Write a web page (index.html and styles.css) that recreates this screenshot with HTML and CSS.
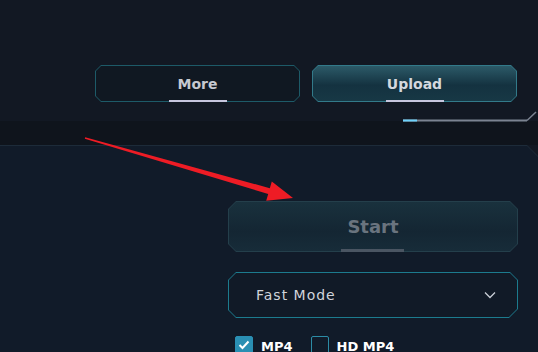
FILE: index.html
```html
<!DOCTYPE html>
<html lang="en">
<head>
  <meta charset="UTF-8" />
  <title>Converter</title>
  <link rel="stylesheet" href="styles.css">
</head>
<body>
  <div class="top">
    <div class="actions">
      <div class="btn btn-more"><div class="btn-face">More</div></div>
      <div class="btn btn-upload"><div class="btn-face">Upload</div></div>
    </div>
    <svg class="progress" width="135" height="11" viewBox="0 0 135 11">
      <line x1="0" y1="9.5" x2="124" y2="9.5" stroke="#7b8391" stroke-width="2"/>
      <line x1="0" y1="9.5" x2="14" y2="9.5" stroke="#6fd2fb" stroke-width="2"/>
      <line x1="124" y1="9.5" x2="133" y2="1" stroke="#7b8391" stroke-width="1.5"/>
    </svg>
  </div>

  <div class="band"></div>

  <div class="panel">
    <div class="panel-inner">
      <div class="controls">
        <div class="start"><div class="start-face">Start</div></div>

        <div class="select">
          <div class="select-face">
            <span>Fast Mode</span>
            <svg width="12" height="8" viewBox="0 0 12 8">
              <polyline points="1,1.5 6,6.5 11,1.5" fill="none" stroke="#c9ced6" stroke-width="1.3"/>
            </svg>
          </div>
        </div>

        <div class="formats">
          <label class="check checked">
            <span class="box">
              <svg width="12" height="10" viewBox="0 0 12 10">
                <polyline points="1.5,5 4.5,8 10.5,1.5" fill="none" stroke="#fff" stroke-width="2"/>
              </svg>
            </span>
            MP4
          </label>
          <label class="check">
            <span class="box"></span>
            HD MP4
          </label>
        </div>
      </div>
    </div>
  </div>

  <!-- annotation arrow -->
  <svg class="arrow" width="538" height="352" viewBox="0 0 538 352">
    <polygon points="85.2,137.3 269.8,188.2 271.8,181.5 293,198 266.2,200.7 268.2,194 84.8,138.7" fill="#ee1c25"/>
  </svg>
</body>
</html>
```

FILE: styles.css
```css
:root {
  --bg: #121823;
  --band: #0f141c;
  --panel: #111b29;
  --teal: #1c7b8e;
  --text: #d3d7de;
}

body {
  margin: 0;
  width: 538px;
  height: 352px;
  overflow: hidden;
  background-color: var(--bg);
  font-family: 'DejaVu Sans', sans-serif;
  color: var(--text);
  position: relative;
}

.top {
  height: 121px;
  box-sizing: border-box;
  padding-top: 65px;
}

.actions {
  display: flex;
  gap: 12px;
  padding-left: 95px;
}

.progress {
  display: block;
  margin: 9px 0 0 403px;
}

.btn {
  position: relative;
  width: 205px;
  height: 37px;
  padding: 1px;
  box-sizing: border-box;
  clip-path: polygon(6px 0, calc(100% - 6px) 0, 100% 6px, 100% calc(100% - 6px), calc(100% - 6px) 100%, 6px 100%, 0 calc(100% - 6px), 0 6px);
}

.btn-face {
  height: 100%;
  display: flex;
  align-items: center;
  justify-content: center;
  font-size: 14px;
  font-weight: bold;
  clip-path: polygon(5px 0, calc(100% - 5px) 0, 100% 5px, 100% calc(100% - 5px), calc(100% - 5px) 100%, 5px 100%, 0 calc(100% - 5px), 0 5px);
}

.btn::after {
  content: '';
  position: absolute;
  left: 50%;
  bottom: 0;
  width: 58px;
  height: 2px;
  margin-left: -29px;
  background-color: #c7c6de;
}

.btn-more {
  background-color: #1d5a68;
}

.btn-more .btn-face {
  background-color: #101822;
  color: #c6c9d0;
}

.btn-upload {
  background-color: #327a8a;
}

.btn-upload .btn-face {
  background: linear-gradient(#2c5a68, #143240 55%, #173845);
  color: #d4d8de;
}

.band {
  height: 24px;
  background-color: var(--band);
}

.panel {
  height: 207px;
  padding-top: 1px;
  box-sizing: border-box;
  background-color: #1d2b39;
  clip-path: polygon(0 0, 527px 0, 100% 11px, 100% 100%, 0 100%);
}

.panel-inner {
  height: 100%;
  background-color: var(--panel);
  clip-path: polygon(0 0, 527px 0, 100% 11px, 100% 100%, 0 100%);
}

.controls {
  width: 290px;
  padding: 55px 0 0 228px;
  display: flex;
  flex-direction: column;
}

.start {
  position: relative;
  height: 51px;
  padding: 1px;
  box-sizing: border-box;
  background-color: #243f4b;
  clip-path: polygon(8px 0, calc(100% - 8px) 0, 100% 8px, 100% calc(100% - 8px), calc(100% - 8px) 100%, 8px 100%, 0 calc(100% - 8px), 0 8px);
}

.start-face {
  height: 100%;
  display: flex;
  align-items: center;
  justify-content: center;
  font-size: 18px;
  font-weight: bold;
  color: #6a747f;
  background: linear-gradient(#19313d, #142633 60%, #172c39);
  clip-path: polygon(7px 0, calc(100% - 7px) 0, 100% 7px, 100% calc(100% - 7px), calc(100% - 7px) 100%, 7px 100%, 0 calc(100% - 7px), 0 7px);
}

.start::after {
  content: '';
  position: absolute;
  left: 113px;
  bottom: 0;
  width: 63px;
  height: 3px;
  background-color: #4a5562;
}

.select {
  margin-top: 20px;
  height: 46px;
  padding: 1px;
  box-sizing: border-box;
  background-color: var(--teal);
  clip-path: polygon(8px 0, calc(100% - 8px) 0, 100% 8px, 100% calc(100% - 9px), calc(100% - 9px) 100%, 8px 100%, 0 calc(100% - 8px), 0 8px);
}

.select-face {
  height: 100%;
  display: flex;
  align-items: center;
  justify-content: space-between;
  padding: 0 21px 0 27px;
  background-color: #111a27;
  font-size: 14px;
  letter-spacing: 1px;
  color: #d0d4db;
  clip-path: polygon(7px 0, calc(100% - 7px) 0, 100% 7px, 100% calc(100% - 8px), calc(100% - 8px) 100%, 7px 100%, 0 calc(100% - 7px), 0 7px);
}

.formats {
  display: flex;
  gap: 18px;
  margin-top: 18px;
  padding-left: 7px;
}

.check {
  display: flex;
  align-items: flex-start;
  gap: 8px;
  font-size: 13px;
  font-weight: bold;
  color: #ffffff;
  line-height: 18px;
  padding-top: 2px;
}

.box {
  width: 18px;
  height: 18px;
  margin-top: -2px;
  box-sizing: border-box;
  border: 1px solid #2c8ca6;
  border-radius: 2px;
  display: flex;
  align-items: center;
  justify-content: center;
}

.checked .box {
  background-color: #2a8fb3;
  border-color: #2a8fb3;
}

.arrow {
  position: absolute;
  left: 0;
  top: 0;
  pointer-events: none;
}
```
